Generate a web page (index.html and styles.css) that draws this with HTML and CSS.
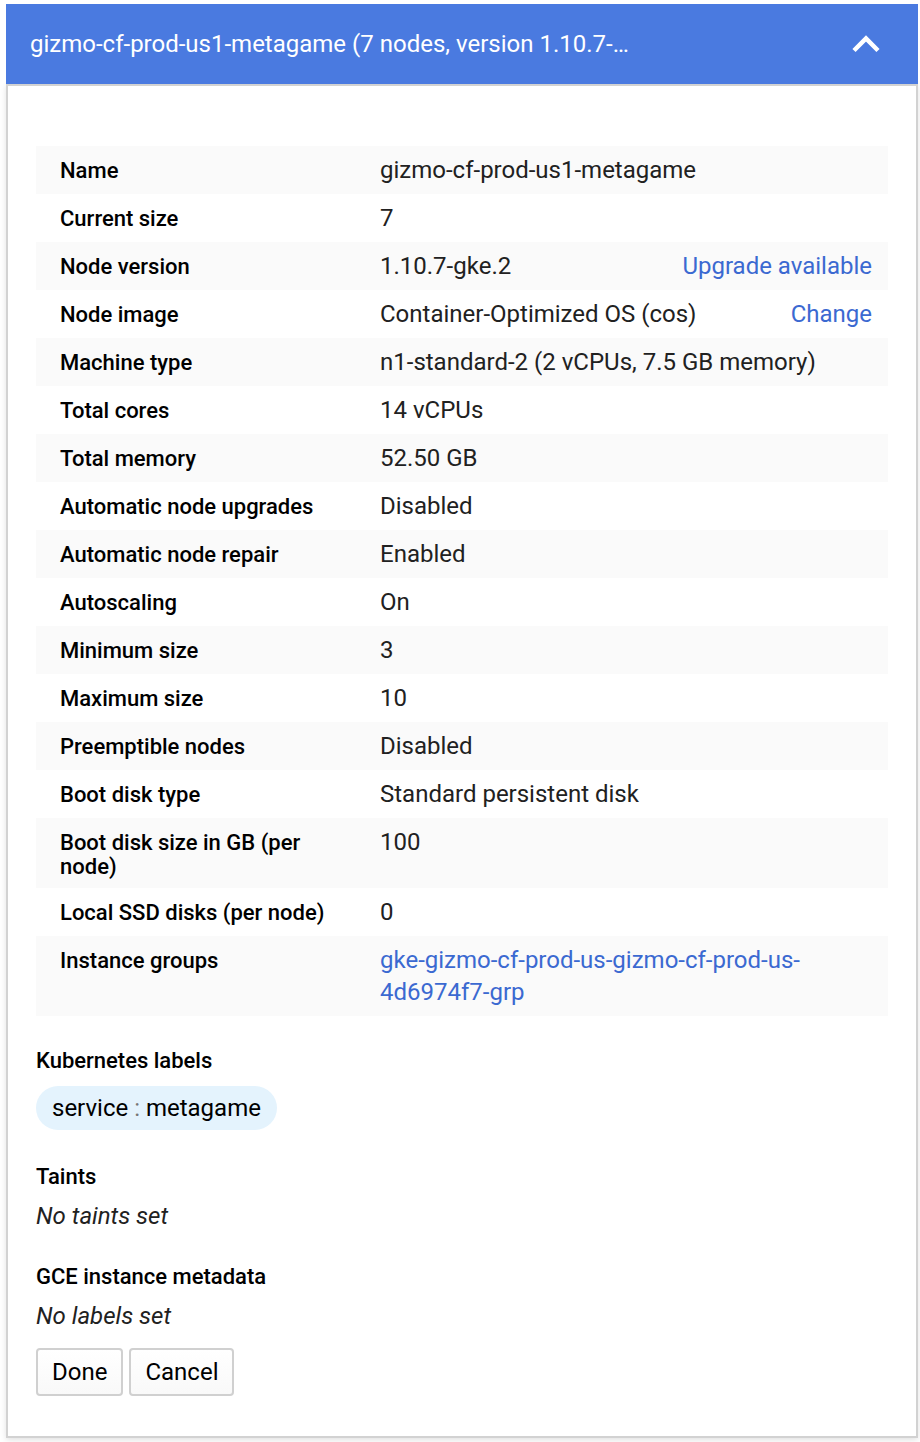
FILE: index.html
```html
<!DOCTYPE html>
<html lang="en">
<head>
<meta charset="utf-8">
<title>Node pool</title>
<link rel="stylesheet" href="styles.css">
</head>
<body>
<main class="pool">
  <button class="pool-header" type="button" aria-expanded="true">
    <span class="pool-title">gizmo-cf-prod-us1-metagame (7 nodes, version 1.10.7-…</span>
    <svg class="chevron" viewBox="0 0 28 18" aria-hidden="true"><path d="M2 15.500L14 3.500L26 15.500" fill="none" stroke="#fff" stroke-width="4.500"/></svg>
  </button>
  <div class="pool-body">
    <table class="props">
      <tr><th scope="row">Name</th><td>gizmo-cf-prod-us1-metagame</td></tr>
      <tr><th scope="row">Current size</th><td>7</td></tr>
      <tr><th scope="row">Node version</th><td><div class="split"><span>1.10.7-gke.2</span><a href="#">Upgrade available</a></div></td></tr>
      <tr><th scope="row">Node image</th><td><div class="split"><span>Container-Optimized OS (cos)</span><a href="#">Change</a></div></td></tr>
      <tr><th scope="row">Machine type</th><td>n1-standard-2 (2 vCPUs, 7.5 GB memory)</td></tr>
      <tr><th scope="row">Total cores</th><td>14 vCPUs</td></tr>
      <tr><th scope="row">Total memory</th><td>52.50 GB</td></tr>
      <tr><th scope="row">Automatic node upgrades</th><td>Disabled</td></tr>
      <tr><th scope="row">Automatic node repair</th><td>Enabled</td></tr>
      <tr><th scope="row">Autoscaling</th><td>On</td></tr>
      <tr><th scope="row">Minimum size</th><td>3</td></tr>
      <tr><th scope="row">Maximum size</th><td>10</td></tr>
      <tr><th scope="row">Preemptible nodes</th><td>Disabled</td></tr>
      <tr><th scope="row">Boot disk type</th><td>Standard persistent disk</td></tr>
      <tr><th scope="row">Boot disk size in GB (per node)</th><td>100</td></tr>
      <tr><th scope="row">Local SSD disks (per node)</th><td>0</td></tr>
      <tr><th scope="row">Instance groups</th><td><a href="#">gke-gizmo-cf-prod-us-gizmo-cf-prod-us-4d6974f7-grp</a></td></tr>
    </table>
    <section class="group">
      <h2>Kubernetes labels</h2>
      <div class="chip">service <span class="colon">:</span> metagame</div>
    </section>
    <section class="group">
      <h2>Taints</h2>
      <p>No taints set</p>
    </section>
    <section class="group">
      <h2>GCE instance metadata</h2>
      <p>No labels set</p>
    </section>
    <div class="actions">
      <button class="btn" type="button">Done</button>
      <button class="btn" type="button">Cancel</button>
    </div>
  </div>
</main>
</body>
</html>
```
FILE: styles.css
```css
* { box-sizing: border-box; }
body {
  margin: 0;
  padding: 4px 2px 4px 6px;
  background: #fff;
  color: #212121;
  font: 24px/32px Roboto, sans-serif;
}
.pool-header {
  position: relative;
  display: flex;
  align-items: center;
  justify-content: space-between;
  width: 100%;
  height: 80px;
  padding: 0 38px 0 24px;
  border: 0;
  background: #4a7ae0;
  color: #fff;
  font: inherit;
  text-align: left;
}
.pool-title {
  overflow: hidden;
  white-space: nowrap;
  text-overflow: ellipsis;
}
.chevron { width: 28px; height: 18px; flex: none; }
.pool-body {
  padding: 60px 28px 40px;
  border: 2px solid #d2d2d2;
  box-shadow: 0 2px 6px rgba(0, 0, 0, 0.12);
}
.props {
  width: 100%;
  border-collapse: collapse;
  table-layout: fixed;
}
.props tr:nth-child(odd) { background: #fafafa; }
.props th,
.props td { padding: 8px 16px 8px 24px; vertical-align: top; text-align: left; }
.props th {
  width: 320px;
  padding-top: 13px;
  padding-bottom: 9px;
  color: #000;
  font-size: 22px;
  font-weight: 500;
  line-height: 24px;
}
a { color: #3b69d1; text-decoration: none; }
.split { display: flex; justify-content: space-between; gap: 16px; }
.group { display: flow-root; margin-top: 32px; }
h2 { margin: 0 0 10px; color: #000; font-size: 22px; font-weight: 500; line-height: 26px; }
.group p { margin: 0; font-style: italic; }
.chip {
  width: fit-content;
  height: 44px;
  margin: 12px 0 2px;
  padding: 0 16px;
  border-radius: 22px;
  background: #e4f3fd;
  color: #000;
  line-height: 44px;
}
.colon { color: #777; }
.actions { display: flex; gap: 6px; margin-top: 16px; }
.btn {
  height: 48px;
  padding: 0 14px;
  border: 2px solid #d0d0d0;
  border-radius: 4px;
  background: linear-gradient(#fff, #f9f9f9);
  color: #000;
  font: inherit;
}
```
